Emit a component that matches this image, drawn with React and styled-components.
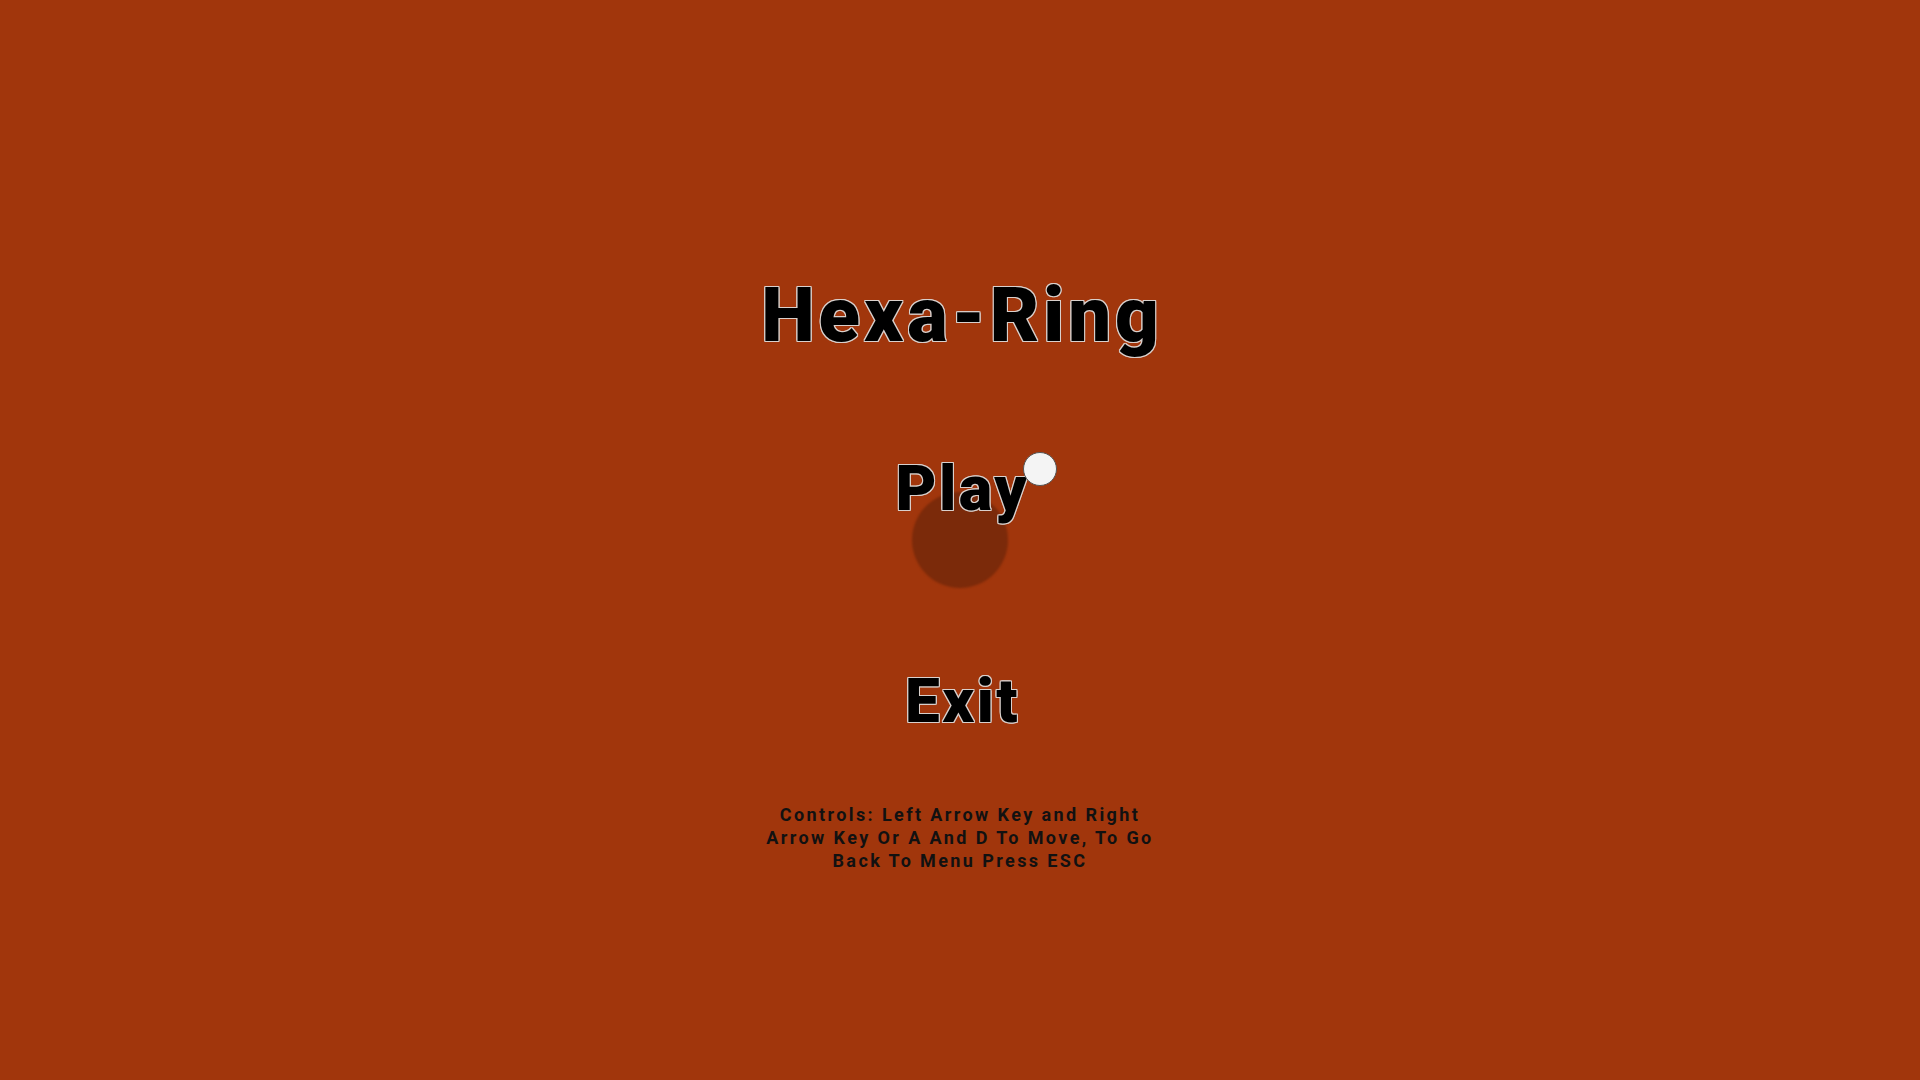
import React from 'react'
import styled, { createGlobalStyle } from 'styled-components'

const GlobalStyle = createGlobalStyle`
  html, body {
    margin: 0;
    padding: 0;
    background: #a1360c;
  }
  body {
    font-family: Roboto, "Liberation Sans", sans-serif;
  }
`

const outline = `
  text-shadow:
    1px 0 0 #d9d0cc, -1px 0 0 #d9d0cc, 0 1px 0 #d9d0cc, 0 -1px 0 #d9d0cc,
    1px 1px 0 #d9d0cc, -1px -1px 0 #d9d0cc, 1px -1px 0 #d9d0cc, -1px 1px 0 #d9d0cc;
`

const Screen = styled.main`
  min-height: 100vh;
  box-sizing: border-box;
  padding-top: 277px;
  display: flex;
  flex-direction: column;
  align-items: center;
  background: #a1360c;
`

const Title = styled.h1`
  margin: 0;
  padding-left: 4px;
  font-size: 76px;
  line-height: 1;
  font-weight: 900;
  letter-spacing: 4px;
  color: #000;
  ${outline}
`

const MenuItem = styled.button`
  position: relative;
  margin: ${p => p.$top}px 0 0;
  padding: 0 0 0 ${p => p.$shift}px;
  border: none;
  background: none;
  font-family: inherit;
  font-size: ${p => p.$size}px;
  line-height: 1;
  font-weight: 900;
  letter-spacing: 2.5px;
  color: #000;
  cursor: pointer;
  ${outline}
`

const Label = styled.span`
  position: relative;
  z-index: 1;
`

const Shadow = styled.span`
  position: absolute;
  left: 50%;
  top: 35px;
  width: 96px;
  height: 96px;
  margin-left: -48px;
  border-radius: 50%;
  background: #7b2a0a;
  filter: blur(1px);
`

const Ball = styled.span`
  position: absolute;
  right: -27px;
  top: -5px;
  width: 34px;
  height: 34px;
  box-sizing: border-box;
  border-radius: 50%;
  background: #f4f4f4;
  border: 1.5px solid #555;
  z-index: 2;
`

const Controls = styled.p`
  margin: 71px 0 0;
  width: 400px;
  text-align: center;
  font-size: 18px;
  line-height: 23px;
  font-weight: 700;
  letter-spacing: 2.4px;
  color: #111;
`

export default function App() {
  return (
    <>
      <GlobalStyle />
      <Screen>
        <Title>Hexa-Ring</Title>
        <MenuItem $top={104} $size={63} $shift={5}>
          <Shadow />
          <Label>Play</Label>
          <Ball />
        </MenuItem>
        <MenuItem $top={150} $size={62} $shift={5}>
          <Label>Exit</Label>
        </MenuItem>
        <Controls>
          Controls: Left Arrow Key and Right Arrow Key Or A And D To Move, To Go Back To Menu Press ESC
        </Controls>
      </Screen>
    </>
  )
}
